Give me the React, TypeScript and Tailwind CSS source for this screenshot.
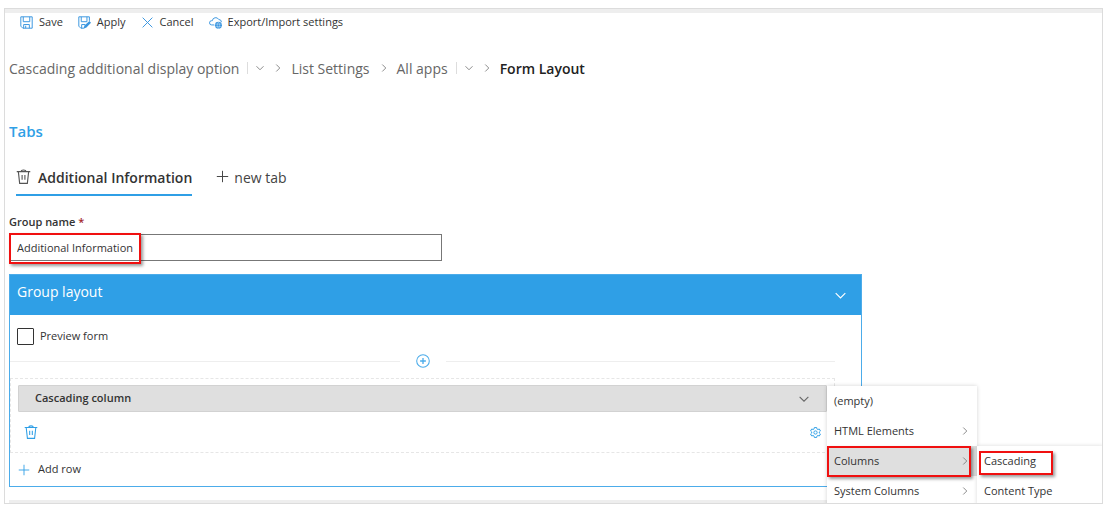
import type { ReactNode } from "react";

type IconProps = { className?: string };

function Svg({ className, children }: { className?: string; children: ReactNode }) {
  return (
    <svg viewBox="0 0 16 16" fill="none" stroke="currentColor" className={`shrink-0 ${className ?? ""}`} aria-hidden="true">
      {children}
    </svg>
  );
}

const SaveIcon = ({ className }: IconProps) => (
  <Svg className={className}>
    <path d="M1 1h14v14H3.500L1 12.500zM4 1v6h8V1M4.500 15v-4.500h7V15M7 12v3" strokeWidth="1.200" />
  </Svg>
);

const ApplyIcon = ({ className }: IconProps) => (
  <Svg className={className}>
    <path d="M7 15H3.500L1 12.500V1h13v5M4 1v6h7V1M4.500 15v-4.500h4.500" strokeWidth="1.200" />
    <path d="M14 6.200l2 2-5.600 5.800-3.900 1.800 1.500-4z" fill="currentColor" stroke="none" />
  </Svg>
);

const CancelIcon = ({ className }: IconProps) => (
  <Svg className={className}>
    <path d="M2 2l12 12M14 2L2 14" strokeWidth="1.200" />
  </Svg>
);

const CloudIcon = ({ className }: IconProps) => (
  <Svg className={className}>
    <path d="M6.500 11H3.300a2.600 2.600 0 0 1-.1-5.200h.9A4.200 4.200 0 0 1 12 4.300 3.300 3.300 0 0 1 15.300 7.500" strokeWidth="1.200" />
    <circle cx="11.600" cy="11.500" r="4.300" fill="currentColor" stroke="none" />
    <path d="M7.600 10h8M7.600 13h8M11.600 7.500c-2 2.400-2 5.600 0 8M11.600 7.500c2 2.400 2 5.600 0 8" stroke="#fff" strokeWidth=".4" />
  </Svg>
);

const TrashIcon = ({ className }: IconProps) => (
  <Svg className={className}>
    <path d="M.8 2.800h14.400M5.500 2.800c0-2.400 5-2.400 5 0M2.500 2.800l1.400 12.500h8.200l1.400-12.500M6.500 6.500v5M9.500 6.500v5" strokeWidth="1.200" />
  </Svg>
);

const PlusIcon = ({ className }: IconProps) => (
  <Svg className={className}>
    <path d="M8 1v14M1 8h14" strokeWidth="1.200" />
  </Svg>
);

const ChevronDown = ({ className }: IconProps) => (
  <Svg className={className}>
    <path d="M1 4.500L8 11.500l7-7" strokeWidth="1.700" />
  </Svg>
);

const ChevronRight = ({ className }: IconProps) => (
  <Svg className={className}>
    <path d="M4.500 1L11.500 8l-7 7" strokeWidth="1.700" />
  </Svg>
);

const CirclePlus = ({ className }: IconProps) => (
  <Svg className={className}>
    <circle cx="8" cy="8" r="7.200" strokeWidth="1.200" />
    <path d="M8 4.700v6.600M4.700 8h6.600" strokeWidth="1.500" />
  </Svg>
);

const GearIcon = ({ className }: IconProps) => (
  <Svg className={className}>
    <path
      d="M6.300.8h3.400l.5 2.200 1.100.7 2.200-.8 1.700 2.900-1.700 1.500v1.400l1.700 1.500-1.700 2.900-2.200-.8-1.100.7-.5 2.200H6.300L5.800 13l-1.100-.7-2.200.8L.8 10.200l1.700-1.500V7.300L.8 5.800l1.700-2.900 2.200.8L5.800 3z"
      strokeWidth="1.400"
    />
    <circle cx="8" cy="8" r="2.400" strokeWidth="1.400" />
  </Svg>
);

const commands = [
  { label: "Save", icon: SaveIcon },
  { label: "Apply", icon: ApplyIcon },
  { label: "Cancel", icon: CancelIcon },
  { label: "Export/Import settings", icon: CloudIcon },
];

const menuItems = [
  { label: "(empty)", nested: false, active: false },
  { label: "HTML Elements", nested: true, active: false },
  { label: "Columns", nested: true, active: true },
  { label: "System Columns", nested: true, active: false },
];

function Crumb({ children, menu }: { children: string; menu?: boolean }) {
  return (
    <li className="flex items-center">
      <a href="#" className="text-[#666]">{children}</a>
      {menu && (
        <button type="button" aria-label={`${children} menu`} className="ml-2 flex h-3 items-center border-l border-[#ddd] pl-2">
          <ChevronDown className="size-2 text-[#777]" />
        </button>
      )}
      <ChevronRight className="mr-[9px] ml-2.5 size-2 text-[#777]" />
    </li>
  );
}

const highlight = "pointer-events-none absolute border-2 border-[#f01010] shadow-[2px_2px_3px_rgba(0,0,0,0.4)]";

function ColumnMenu() {
  return (
    <div className="absolute top-[111px] left-full z-10 -ml-[34px] w-[150px] bg-white shadow-[0_0_4px_rgba(0,0,0,0.18)]">
      <ul>
        {menuItems.map((item) => (
          <li key={item.label} className="relative">
            <button
              type="button"
              className={`flex h-[30px] w-full items-center justify-between pr-2 pl-[7px] ${item.active ? "bg-[#dfdfdf]" : ""}`}
            >
              {item.label}
              {item.nested && <ChevronRight className="size-2 text-[#777]" />}
            </button>
            {item.active && (
              <>
                <ul className="absolute top-0 left-full w-[126px] bg-white shadow-[0_0_4px_rgba(0,0,0,0.15)]">
                  <li className="relative">
                    <button type="button" className="h-[30px] w-full pl-[7px] text-left">Cascading</button>
                    <span className={`${highlight} top-[5px] left-[2px] h-6 w-[74px]`} />
                  </li>
                  <li>
                    <button type="button" className="h-[30px] w-full pl-[7px] text-left">Content Type</button>
                  </li>
                </ul>
                <span className={`${highlight} top-0 left-0 h-[31px] w-[144px]`} />
              </>
            )}
          </li>
        ))}
      </ul>
    </div>
  );
}

export default function App() {
  return (
    <div className="bg-white pt-2 pr-[13px] pb-3 pl-1 font-['Open_Sans','Noto_Sans',sans-serif] text-[11px] text-[#333]">
      <main className="overflow-hidden border border-[#dcdcdc]">
        <div className="h-1 bg-[#eeeeee]" />
        <div className="flex h-[18px] items-center gap-[15px] pl-[15px]">
          {commands.map(({ label, icon: Icon }) => (
            <button key={label} type="button" className="flex items-center gap-1.5">
              <Icon className="size-[13px] text-[#3a96e0]" />
              {label}
            </button>
          ))}
        </div>

        <div className="pl-1">
          <nav aria-label="Breadcrumb" className="mt-[27px]">
            <ol className="flex h-5 items-center text-[14px]">
              <Crumb menu>Cascading additional display option</Crumb>
              <Crumb>List Settings</Crumb>
              <Crumb menu>All apps</Crumb>
              <li className="font-semibold text-[#222]">Form Layout</li>
            </ol>
          </nav>

          <h2 className="mt-[43px] h-5 text-[15px] leading-5 font-semibold text-[#2f9fe6]">Tabs</h2>

          <div className="mt-6 flex items-start gap-6 pl-[7px] text-[14px]">
            <button type="button" className="flex h-[31px] items-start gap-[7px] border-b-2 border-[#2f9fe6] leading-[26px] font-semibold">
              <TrashIcon className="mt-1 size-[15px] text-[#555]" />
              Additional Information
            </button>
            <button type="button" className="flex items-start gap-[5px] leading-[26px] text-[#444]">
              <PlusIcon className="mt-[5px] size-[13px]" />
              new tab
            </button>
          </div>

          <label htmlFor="group-name" className="mt-4 block h-5 leading-5 font-semibold">
            Group name <span className="text-[#a4262c]">*</span>
          </label>
          <div className="relative mt-0.5 max-w-[433px]">
            <input
              id="group-name"
              defaultValue="Additional Information"
              className="block h-[27px] w-full border border-[#777] px-[7px] outline-none"
            />
            <span className={`${highlight} -top-px left-0 h-[31px] w-[132px]`} />
          </div>

          <section className="relative mt-[13px] w-full max-w-[853px] border border-[#4cacea]">
            <ColumnMenu />
            <header className="flex h-10 items-center justify-between bg-[#2f9fe6] pr-[15px] pb-2 pl-[7px] text-white">
              <h3 className="text-[14px]">Group layout</h3>
              <button type="button" aria-label="Collapse group" className="mt-2">
                <ChevronDown className="size-[11px]" />
              </button>
            </header>

            <label className="mt-[13px] ml-[7px] flex h-[17px] w-fit items-center gap-1.5">
              <input type="checkbox" className="size-[17px] appearance-none rounded-[1px] border border-[#333] bg-white" />
              Preview form
            </label>

            <div className="mt-2 mr-[26px] flex h-4 items-center justify-between gap-4">
              <span className="h-px flex-1 bg-[#eeeeee]" />
              <button type="button" aria-label="Insert row" className="text-[#4cacea]">
                <CirclePlus className="size-3.5" />
              </button>
              <span className="h-px flex-1 bg-[#eeeeee]" />
            </div>

            <div className="mt-[9px] mr-[26px] h-[75px] border border-dashed border-[#e6e6e6] px-[7px] pt-1.5">
              <button
                type="button"
                className="flex h-[27px] w-full items-center justify-between rounded-[1px] border border-[#d2d2d2] bg-[#dfdfdf] pr-[17px] pl-4 font-semibold"
              >
                Cascading column
                <ChevronDown className="size-2.5 text-[#666]" />
              </button>
              <div className="flex h-10 items-center justify-between pr-1.5 pl-1.5 text-[#2f9fe6]">
                <button type="button" aria-label="Delete row">
                  <TrashIcon className="size-3.5" />
                </button>
                <button type="button" aria-label="Row settings">
                  <GearIcon className="size-[11px]" />
                </button>
              </div>
            </div>

            <button type="button" className="flex h-[33px] items-center gap-2 pl-2">
              <PlusIcon className="size-3 text-[#2f9fe6]" />
              Add row
            </button>
          </section>
          <div className="mt-[13px] h-[3px] bg-[#eeeeee]" />
        </div>
      </main>
    </div>
  );
}
